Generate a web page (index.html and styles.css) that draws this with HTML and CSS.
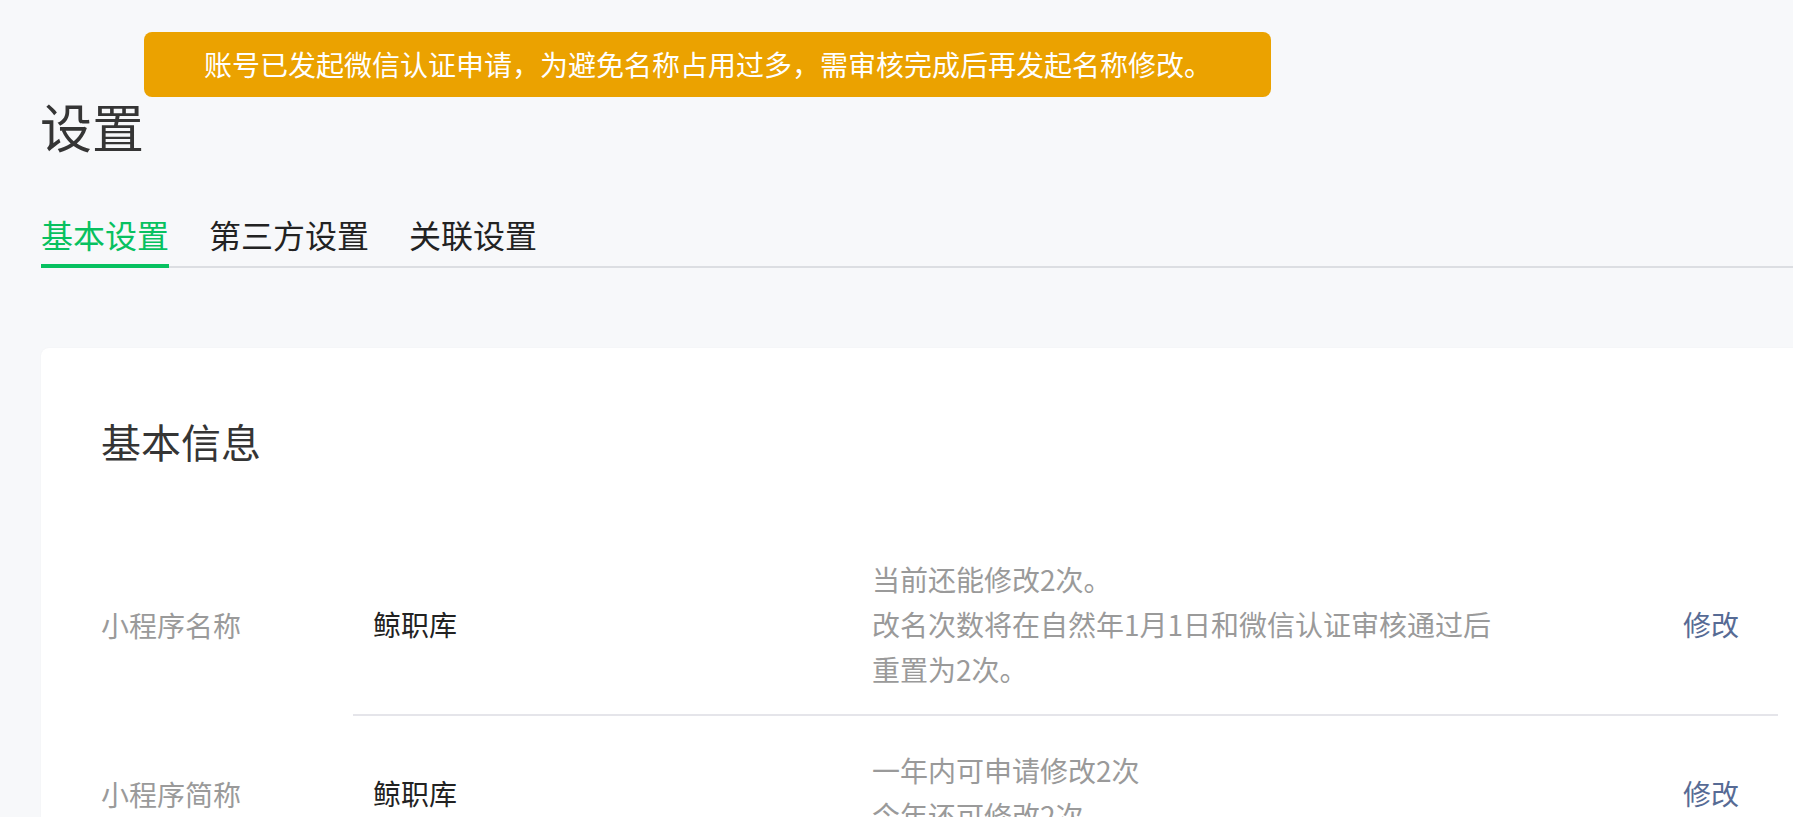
FILE: index.html
```html
<!DOCTYPE html>
<html>
<head>
    <meta charset="utf-8">
    <title>设置</title>
    <link rel="stylesheet" href="styles.css">
</head>
<body>

    <div class="toast">账号已发起微信认证申请，为避免名称占用过多，需审核完成后再发起名称修改。</div>

    <div class="main">
        <h1 class="page-title">设置</h1>

        <div class="tabs">
            <a class="tab active">基本设置</a>
            <a class="tab">第三方设置</a>
            <a class="tab">关联设置</a>
        </div>

        <div class="card">
            <h2 class="card-title">基本信息</h2>

            <div class="row">
                <div class="row-label">小程序名称</div>
                <div class="row-body">
                    <div class="row-value">鲸职库</div>
                    <div class="row-desc">
                        <p>当前还能修改2次。</p>
                        <p>改名次数将在自然年1月1日和微信认证审核通过后重置为2次。</p>
                    </div>
                    <a class="row-action">修改</a>
                </div>
            </div>

            <div class="row">
                <div class="row-label">小程序简称</div>
                <div class="row-body">
                    <div class="row-value">鲸职库</div>
                    <div class="row-desc">
                        <p>一年内可申请修改2次</p>
                        <p>今年还可修改2次</p>
                    </div>
                    <a class="row-action">修改</a>
                </div>
            </div>
        </div>
    </div>

</body>
</html>
```

FILE: styles.css
```css
html,
body {
    margin: 0;
    overflow: hidden;
    background: #f7f8fa;
    font-family: "Noto Sans CJK SC", "Noto Sans", sans-serif;
    color: #353535;
}

.toast {
    position: absolute;
    left: 144px;
    top: 32px;
    width: 1127px;
    height: 65px;
    line-height: 65px;
    box-sizing: border-box;
    padding: 0 60px;
    border-radius: 8px;
    background: #eba200;
    color: #fff;
    font-size: 28px;
    white-space: nowrap;
}

.main {
    width: 1797px;
    margin-left: 41px;
    padding-top: 90px;
}

.page-title {
    margin: 0 0 50px -1px;
    font-size: 52px;
    line-height: 72px;
    font-weight: normal;
    color: #353535;
}

.tabs {
    display: flex;
    gap: 40px;
    border-bottom: 2px solid #dcdee2;
}

.tab {
    margin-bottom: -2px;
    padding-bottom: 8px;
    border-bottom: 4px solid transparent;
    font-size: 32px;
    line-height: 44px;
    color: #222;
    cursor: pointer;
}

.tab.active {
    color: #07c160;
    border-bottom-color: #07c160;
}

.card {
    margin-top: 80px;
    padding: 65px 60px 0;
    background: #fff;
    border-radius: 8px;
    box-shadow: 0 0 2px rgba(0, 0, 0, 0.04);
}

.card-title {
    margin: 0 0 66px;
    font-size: 40px;
    line-height: 56px;
    font-weight: normal;
    color: #353535;
}

.row {
    display: flex;
    align-items: center;
    font-size: 28px;
    line-height: 45px;
}

.row-label {
    width: 252px;
    flex-shrink: 0;
    color: #9a9a9a;
}

.row-body {
    flex: 1;
    display: flex;
    align-items: center;
    min-height: 156px;
    box-sizing: border-box;
    padding: 22px 39px 22px 20px;
    border-bottom: 2px solid #e5e5ea;
}

.row-value {
    width: 499px;
    flex-shrink: 0;
    color: #222;
}

.row-desc {
    flex: 1;
    color: #9a9a9a;
}

.row-desc p {
    margin: 0;
    max-width: 636px;
}

.row-action {
    color: #576b95;
    cursor: pointer;
}
```
